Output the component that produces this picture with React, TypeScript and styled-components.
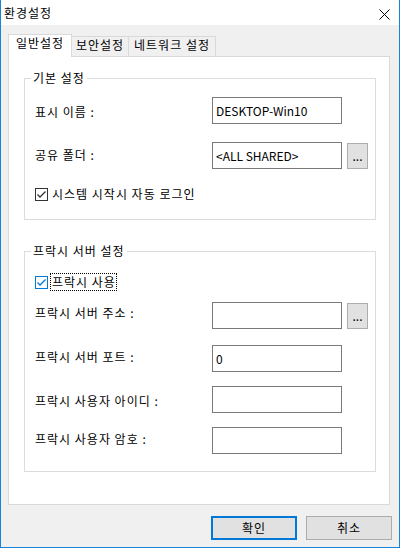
import React from 'react';
import styled, { createGlobalStyle } from 'styled-components';

const GlobalStyle = createGlobalStyle`
  html, body {
    margin: 0;
    padding: 0;
    background: #ffffff;
  }
  body {
    font-family: 'Noto Sans CJK KR', 'Noto Sans', sans-serif;
    font-size: 12px;
    line-height: 16px;
    letter-spacing: 1px;
    color: #000000;
  }
  * {
    box-sizing: border-box;
  }
`;

const Window = styled.div`
  width: 400px;
  height: 548px;
  display: flex;
  flex-direction: column;
  background: #f0f0f0;
  border: 1px solid #1883d7;
  border-top: none;
`;

const TitleBar = styled.div`
  flex: none;
  height: 25px;
  display: flex;
  align-items: center;
  justify-content: space-between;
  padding: 0 9px 0 3px;
  background: #ffffff;
`;

const CloseIcon = styled.svg`
  display: block;
  margin-top: 4px;
`;

const Body = styled.div`
  flex: 1;
  display: flex;
  flex-direction: column;
  padding: 9px 7px 7px 7px;
`;

const TabRow = styled.div`
  display: flex;
  align-items: flex-end;
  height: 22px;
`;

const Tab = styled.div<{ $active?: boolean; $width: number; $first?: boolean }>`
  position: relative;
  z-index: ${(p) => (p.$active ? 1 : 0)};
  width: ${(p) => p.$width}px;
  height: ${(p) => (p.$active ? 23 : 20)}px;
  margin-bottom: ${(p) => (p.$active ? -1 : 0)}px;
  display: flex;
  justify-content: center;
  background: ${(p) => (p.$active ? '#ffffff' : '#f0f0f0')};
  border: 1px solid #d9d9d9;
  border-bottom: none;
  border-left-width: ${(p) => (p.$first ? 1 : 0)}px;
  white-space: nowrap;
`;

const Panel = styled.div`
  flex: none;
  height: 449px;
  margin-right: 2px;
  padding: 13px 13px 0 15px;
  background: #ffffff;
  border: 1px solid #d9d9d9;
`;

const Group = styled.fieldset<{ $gap?: number }>`
  margin: ${(p) => p.$gap ?? 0}px 0 0 0;
  padding: 0;
  min-width: 0;
  border: 1px solid #dcdcdc;
`;

const Legend = styled.legend`
  margin-left: 6px;
  padding: 0 2px;
  line-height: 16px;
`;

const GroupBody = styled.div<{ $top: number }>`
  padding: ${(p) => p.$top}px 0 17px 10px;
`;

const Row = styled.div<{ $mt?: number }>`
  display: flex;
  align-items: flex-start;
  margin-top: ${(p) => p.$mt ?? 0}px;
`;

const Label = styled.span<{ $offset: number }>`
  flex: none;
  width: 177px;
  padding-top: ${(p) => p.$offset}px;
  white-space: nowrap;
`;

const TextBox = styled.input`
  flex: none;
  width: 130px;
  height: 27px;
  margin: 0;
  padding: 4px 3px 5px 3px;
  border: 1px solid #7a7a7a;
  border-radius: 0;
  background: #ffffff;
  font: inherit;
  line-height: 16px;
  letter-spacing: 0;
  color: #000000;
  outline: none;
`;

const BrowseButton = styled.button`
  flex: none;
  width: 21px;
  height: 26px;
  margin: 1px 0 0 5px;
  padding: 0;
  border: 1px solid #adadad;
  border-radius: 0;
  background: #e1e1e1;
  font: inherit;
  line-height: 16px;
  letter-spacing: 0;
  color: #000000;
`;

const CheckRow = styled.label<{ $mt?: number }>`
  display: flex;
  align-items: center;
  margin-top: ${(p) => p.$mt ?? 0}px;
  white-space: nowrap;
`;

const CheckIcon = styled.svg`
  display: block;
  flex: none;
  margin-top: 1px;
`;

const CheckText = styled.span<{ $focused?: boolean }>`
  margin-left: ${(p) => (p.$focused ? 2 : 4)}px;
  padding: 0 ${(p) => (p.$focused ? 0 : 0)}px 0 ${(p) => (p.$focused ? 1 : 0)}px;
  border: ${(p) => (p.$focused ? '1px dotted #000000' : 'none')};
`;

const ButtonBar = styled.div`
  display: flex;
  justify-content: flex-end;
  gap: 9px;
  margin-top: 11px;
`;

const DialogButton = styled.button<{ $default?: boolean }>`
  width: 86px;
  height: 24px;
  margin: 0;
  padding: 0;
  border: ${(p) => (p.$default ? '2px solid #0078d7' : '1px solid #adadad')};
  border-radius: 0;
  background: #e1e1e1;
  font: inherit;
  line-height: 16px;
  letter-spacing: 1px;
  color: #000000;
`;

const Checkbox: React.FC<{ focused?: boolean }> = ({ focused }) => {
  const color = focused ? '#0078d7' : '#333333';
  return (
    <CheckIcon width="13" height="13" viewBox="0 0 13 13">
      <rect x="0.5" y="0.5" width="12" height="12" fill="#ffffff" stroke={color} />
      <polyline
        points="2.5,6.5 5,9 10.5,3.5"
        fill="none"
        stroke={color}
        strokeWidth="1.3"
      />
    </CheckIcon>
  );
};

const Field: React.FC<{
  label: string;
  value?: string;
  offset: number;
  mt?: number;
  browse?: boolean;
}> = ({ label, value = '', offset, mt, browse }) => (
  <Row $mt={mt}>
    <Label $offset={offset}>{label}</Label>
    <TextBox readOnly defaultValue={value} />
    {browse && <BrowseButton>...</BrowseButton>}
  </Row>
);

export default function App() {
  return (
    <>
      <GlobalStyle />
      <Window>
        <TitleBar>
          <span>환경설정</span>
          <CloseIcon width="11" height="11" viewBox="0 0 11 11">
            <path d="M0.5 0.5 L10.5 10.5 M10.5 0.5 L0.5 10.5" stroke="#000000" strokeWidth="1" />
          </CloseIcon>
        </TitleBar>
        <Body>
          <TabRow>
            <Tab $active $first $width={64}>
              일반설정
            </Tab>
            <Tab $width={57}>보안설정</Tab>
            <Tab $width={87}>네트워크 설정</Tab>
          </TabRow>
          <Panel>
            <Group>
              <Legend>기본 설정</Legend>
              <GroupBody $top={11}>
                <Field label="표시 이름 :" value="DESKTOP-Win10" offset={7} />
                <Field label="공유 폴더 :" value="<ALL SHARED>" offset={5} mt={18} browse />
                <CheckRow $mt={17}>
                  <Checkbox />
                  <CheckText>시스템 시작시 자동 로그인</CheckText>
                </CheckRow>
              </GroupBody>
            </Group>
            <Group $gap={23}>
              <Legend>프락시 서버 설정</Legend>
              <GroupBody $top={14}>
                <CheckRow>
                  <Checkbox focused />
                  <CheckText $focused>프락시 사용</CheckText>
                </CheckRow>
                <Field label="프락시 서버 주소 :" offset={3} mt={11} browse />
                <Field label="프락시 서버 포트 :" value="0" offset={4} mt={16} />
                <Field label="프락시 사용자 아이디 :" offset={7} mt={14} />
                <Field label="프락시 사용자 암호 :" offset={4} mt={14} />
              </GroupBody>
            </Group>
          </Panel>
          <ButtonBar>
            <DialogButton $default>확인</DialogButton>
            <DialogButton>취소</DialogButton>
          </ButtonBar>
        </Body>
      </Window>
    </>
  );
}
